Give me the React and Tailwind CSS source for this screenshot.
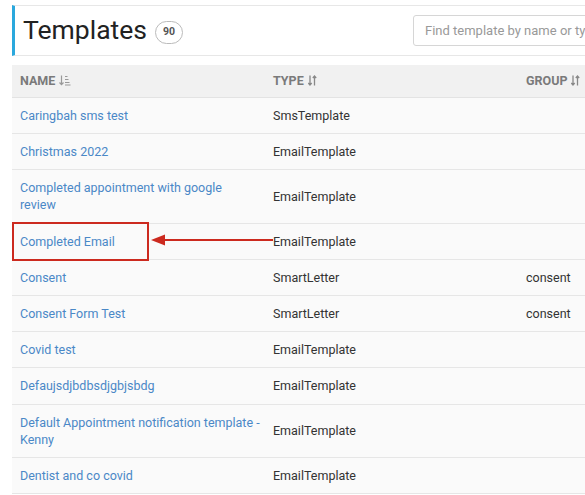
import React from "react";

const rows = [
    { name: "Caringbah sms test", type: "SmsTemplate", group: "" },
    { name: "Christmas 2022", type: "EmailTemplate", group: "" },
    { name: "Completed appointment with google review", type: "EmailTemplate", group: "" },
    { name: "Completed Email", type: "EmailTemplate", group: "" },
    { name: "Consent", type: "SmartLetter", group: "consent" },
    { name: "Consent Form Test", type: "SmartLetter", group: "consent" },
    { name: "Covid test", type: "EmailTemplate", group: "" },
    { name: "Defaujsdjbdbsdjgbjsbdg", type: "EmailTemplate", group: "" },
    { name: "Default Appointment notification template - Kenny", type: "EmailTemplate", group: "" },
    { name: "Dentist and co covid", type: "EmailTemplate", group: "" },
];

function SortAsc() {
    return (
        <svg width="12" height="11" viewBox="0 0 12 11" className="inline-block ml-[4px] -mt-[2px]">
            <path d="M2.5 0.5v9M0.5 7.5l2 2.2 2-2.2" stroke="#999" strokeWidth="1.2" fill="none" />
            <path d="M6 1.5h2.5M6 4.5h3.5M6 7.5h4.5M6 10h5.5" stroke="#999" strokeWidth="1.1" fill="none" />
        </svg>
    );
}

function SortBoth() {
    return (
        <svg width="9" height="11" viewBox="0 0 9 11" className="inline-block ml-[4px] -mt-[2px]">
            <path d="M2 0.5v9.5M0.3 8l1.7 2 1.7-2" stroke="#888" strokeWidth="1.3" fill="none" />
            <path d="M6.5 10.5v-9.5M4.8 3l1.7-2 1.7 2" stroke="#888" strokeWidth="1.3" fill="none" />
        </svg>
    );
}

export default function App() {
    return (
        <div className="relative w-[585px] h-[495px] overflow-hidden bg-white font-['Roboto',sans-serif] text-[12.5px] text-[#333]">
            <div className="pt-[5px] pl-[12px]">
                <div className="flex items-center h-[51px] w-[700px] border-t border-b border-[#e7e7e7] border-l-[3px] border-l-[#2aa8dd] bg-white">
                    <h1 className="ml-[8px] text-[26.5px] leading-none text-[#222] font-normal">Templates</h1>
                    <span className="ml-[8px] mt-[3px] h-[23px] w-[28px] flex items-center justify-center rounded-full border border-[#bbb] text-[10.5px] font-bold text-[#555]">90</span>
                    <input
                        className="ml-[230px] h-[31px] w-[260px] rounded-[3px] border border-[#d6d6d6] bg-white px-[11px] text-[13px] placeholder:text-[#999] outline-none"
                        placeholder="Find template by name or type"
                    />
                </div>

                <div className="mt-[9px] w-[760px]">
                    <div className="flex h-[33px] items-center bg-[#f1f1f1] border-b border-[#e3e3e3] text-[12.5px] font-bold text-[#7a7a7a]">
                        <div className="w-[253px] pl-[8px]">NAME<SortAsc /></div>
                        <div className="w-[253px] pl-[8px]">TYPE<SortBoth /></div>
                        <div className="pl-[8px]">GROUP<SortBoth /></div>
                    </div>
                    {rows.map((r) => (
                        <div key={r.name} className="flex items-center py-[9.1px] bg-[#fafafa] border-b border-[#e6e6e6] leading-[17px]">
                            <div className="w-[253px] pl-[8px] pr-[5px]">
                                <span className="text-[#4a88c7]">{r.name}</span>
                            </div>
                            <div className="w-[253px] pl-[8px]">{r.type}</div>
                            <div className="pl-[8px]">{r.group}</div>
                        </div>
                    ))}
                </div>
            </div>

            <div className="absolute left-[12px] top-[222px] w-[137px] h-[39px] border-2 border-[#cc2a1f]" />
            <svg className="absolute left-[149px] top-[233px]" width="125" height="14" viewBox="0 0 125 14">
                <path d="M14 7H124" stroke="#cc2a1f" strokeWidth="2" />
                <path d="M2 7L16 1.5V12.5Z" fill="#cc2a1f" />
            </svg>
        </div>
    );
}
